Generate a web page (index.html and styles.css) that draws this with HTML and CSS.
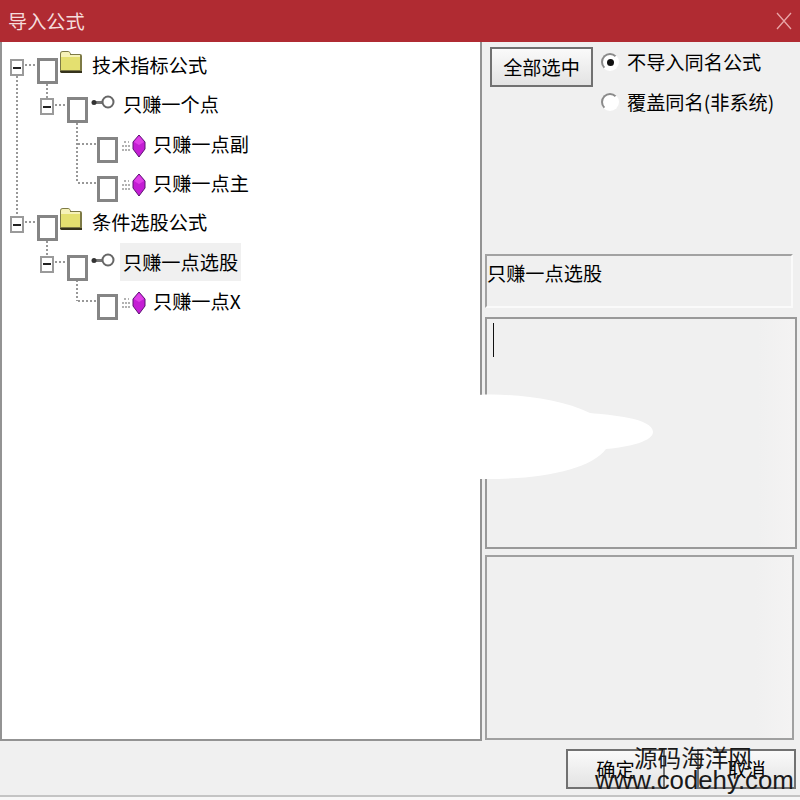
FILE: index.html
```html
<!DOCTYPE html>
<html lang="zh">
<head>
    <meta charset="UTF-8">
    <title>导入公式</title>
    <link rel="stylesheet" href="styles.css">
</head>
<body>
    <svg class="defs" width="0" height="0">
        <symbol id="folder" viewBox="0 0 24 24">
            <path d="M1 21V4q0-3 3-3h5q2 0 3 3h9q2 0 2 2v17H3q-2 0-2-2z" fill="#7d7a45"/>
            <path d="M2 20V5q0-3 2-3h5q2 0 2 3h10v15z" fill="#e4e070"/>
            <path d="M2 7V4q0-2 2-2h5q2 0 2 3h10v2z" fill="#f6f2b8"/>
            <path d="M1 21h22v2H4q-3 0-3-2z" fill="#35321c"/>
        </symbol>
        <symbol id="key" viewBox="0 0 24 16">
            <path d="M3 7.5h9" stroke="#777" stroke-width="3" fill="none"/>
            <circle cx="3" cy="7.5" r="2.5" fill="#333"/>
            <circle cx="17" cy="7" r="5.5" fill="#fff" stroke="#666" stroke-width="2"/>
        </symbol>
        <symbol id="gem" viewBox="0 0 26 22">
            <path d="M2 7h2m2 0h1M0 11h9M0 15h9" stroke="#999" stroke-width="1.5" stroke-dasharray="2 1"/>
            <path d="M17 0l6 7v7l-6 8-6-8V7z" fill="#c41ed4" stroke="#5a1470" stroke-width="1"/>
            <path d="M17 1l-5 6 5 3 5-3z" fill="#e040e8"/>
        </symbol>
    </svg>

    <div class="window">
        <div class="titlebar">
            <span class="title">导入公式</span>
            <svg class="close" width="16" height="18" viewBox="0 0 16 18"><path d="M1 1l14 16M15 1L1 17" stroke="#e8a6a8" stroke-width="1.3"/></svg>
        </div>

        <div class="main">
            <div class="tree">
                <!-- dotted connector lines, page coordinates -->
                <svg class="lines" viewBox="2 42 478 697">
                    <path d="M17 76V214M25 65H36M47 84V98M55 105H66M77 123V183M78 144H96M78 183H96M47 241V255M55 262H66M77 280V301M78 301H96M25 222H36"/>
                </svg>
                <div class="row lvl0">
                    <span class="toggle"></span><span class="check"></span>
                    <svg class="ico-folder"><use href="#folder"/></svg>
                    <span class="label">技术指标公式</span>
                </div>
                <div class="row lvl1">
                    <span class="toggle"></span><span class="check"></span>
                    <svg class="ico-key"><use href="#key"/></svg>
                    <span class="label">只赚一个点</span>
                </div>
                <div class="row lvl2">
                    <span class="check"></span>
                    <svg class="ico-gem"><use href="#gem"/></svg>
                    <span class="label">只赚一点副</span>
                </div>
                <div class="row lvl2">
                    <span class="check"></span>
                    <svg class="ico-gem"><use href="#gem"/></svg>
                    <span class="label">只赚一点主</span>
                </div>
                <div class="row lvl0">
                    <span class="toggle"></span><span class="check"></span>
                    <svg class="ico-folder"><use href="#folder"/></svg>
                    <span class="label">条件选股公式</span>
                </div>
                <div class="row lvl1">
                    <span class="toggle"></span><span class="check"></span>
                    <svg class="ico-key"><use href="#key"/></svg>
                    <span class="label selected">只赚一点选股</span>
                </div>
                <div class="row lvl2">
                    <span class="check"></span>
                    <svg class="ico-gem"><use href="#gem"/></svg>
                    <span class="label">只赚一点X</span>
                </div>
            </div>

            <div class="side">
                <div class="options">
                    <div class="btn select-all">全部选中</div>
                    <div class="radios">
                        <div class="radio-row"><span class="radio on"></span>不导入同名公式</div>
                        <div class="radio-row"><span class="radio"></span>覆盖同名(非系统)</div>
                    </div>
                </div>
                <div class="name-box">只赚一点选股</div>
                <div class="edit-box"><span class="caret"></span></div>
                <div class="info-box"></div>
            </div>
        </div>

        <div class="footer">
            <div class="btn">确定</div>
            <div class="btn">取消</div>
        </div>
    </div>

    <!-- white smear and watermark sitting on top of the screenshot -->
    <svg class="blob" viewBox="0 0 178 90"><path d="M0 1C32-1 82 4 112 19 132 21 175 24 175 38 175 49 142 54 128 55 112 76 62 86 0 85Z"/></svg>
    <div class="watermark">
        <div class="wm-cn">源码海洋网</div>
        <div class="wm-en">www.codehy.com</div>
    </div>
</body>
</html>
```

FILE: styles.css
```css
html, body { margin: 0; padding: 0; }
body { width: 800px; height: 800px; position: relative; overflow: hidden; background: #f7f7f7; font-family: "Noto Sans CJK SC", "Liberation Sans", sans-serif; font-size: 19.2px; color: #000; }
.defs { display: block; height: 0; }

.window { height: 797px; box-sizing: border-box; background: #f0f0f0; border-bottom: 2px solid #c4c4c4; display: flex; flex-direction: column; }

.titlebar { height: 42px; flex: none; background: #b02b32; display: flex; align-items: center; justify-content: space-between; padding: 0 8px; box-sizing: border-box; }
.title { color: #f5dcdc; line-height: 40px; }

.main { height: 699px; flex: none; display: flex; }

.tree { width: 482px; flex: none; box-sizing: border-box; position: relative; background: #fff; border: 2px solid #939393; border-top: none; padding-top: 4px; }
.lines { position: absolute; top: 0; left: 0; width: 478px; height: 697px; }
.lines path { fill: none; stroke: #777; stroke-width: 1.5; stroke-dasharray: 2 2; }

.row { height: 39.33px; display: flex; align-items: flex-start; position: relative; }
.lvl0 { padding-left: 8px; }
.lvl1 { padding-left: 38px; }
.lvl2 { padding-left: 95px; }

.toggle { width: 14px; height: 17px; box-sizing: border-box; margin-top: 13px; margin-right: 13px; background: #fff; border: 2px solid #9a9a9a; display: flex; align-items: center; justify-content: center; }
.toggle::before { content: ""; width: 8px; height: 2px; background: #222; }
.check { width: 21px; height: 26px; box-sizing: border-box; margin-top: 12px; background: #fff; border: 3px solid #858585; }

.ico-folder { width: 24px; height: 24px; margin-top: 4px; margin-left: 1px; }
.ico-key { width: 24px; height: 16px; margin-top: 10px; margin-left: 3px; }
.ico-gem { width: 26px; height: 22px; margin-top: 10px; margin-left: 4px; }

.label { height: 38px; line-height: 38px; padding: 0 3px; white-space: nowrap; }
.lvl0 .label { margin-left: 6px; }
.lvl1 .label { margin-left: 5px; }
.lvl2 .label { margin-left: 2px; }
.selected { background: #f0f0f0; }

.side { flex: 1; padding-left: 3px; display: flex; flex-direction: column; }
.options { height: 212px; flex: none; box-sizing: border-box; padding: 5px 0 0 5px; display: flex; }
.select-all { width: 103px; height: 40px; }
.radios { margin-left: 8px; }
.radio-row { height: 40px; display: flex; align-items: center; white-space: nowrap; line-height: 42px; }
.radio-row:first-child { margin-top: -5px; }
.radio { width: 18px; height: 18px; box-sizing: border-box; margin-right: 8px; border-radius: 50%; background: #fff; border: 2px solid #fff; border-top-color: #8a8a8a; border-left-color: #8a8a8a; display: flex; align-items: center; justify-content: center; }
.radio.on::before { content: ""; width: 7px; height: 7px; border-radius: 50%; background: #111; }

.btn { box-sizing: border-box; border: 2px solid #717171; background: linear-gradient(#fafafa, #e3e3e3); display: flex; align-items: center; justify-content: center; }

.name-box { width: 308px; height: 54px; flex: none; box-sizing: border-box; border: 2px solid #fafafa; border-top-color: #a2a2a2; border-left-color: #a2a2a2; padding-top: 3px; line-height: 28px; white-space: nowrap; }
.edit-box { width: 312px; height: 232px; flex: none; box-sizing: border-box; margin-top: 9px; border: 2px solid #999; padding: 4px 6px; background: linear-gradient(to right, #f0f0f0 88%, #f4f3f3); }
.caret { display: block; width: 1px; height: 34px; background: #111; }
.info-box { width: 309px; height: 185px; flex: none; box-sizing: border-box; margin-top: 6px; border: 2px solid #a0a0a0; background: linear-gradient(to right, #f0f0f0 88%, #f4f3f3); }

.footer { flex: 1; display: flex; justify-content: flex-end; gap: 32px; padding: 8px 4px 0 0; }
.footer .btn { width: 99px; height: 40px; }

.blob { position: absolute; left: 478px; top: 394px; width: 178px; height: 90px; }
.blob path { fill: #fff; }

.watermark { position: absolute; left: 595px; top: 742px; width: 205px; color: #1a1a1a; }
.wm-cn { font-size: 23.6px; line-height: 30px; padding-left: 39px; }
.wm-en { font-size: 25.8px; line-height: 24px; margin-top: -4px; white-space: nowrap; font-family: "Liberation Sans", sans-serif; }
```
